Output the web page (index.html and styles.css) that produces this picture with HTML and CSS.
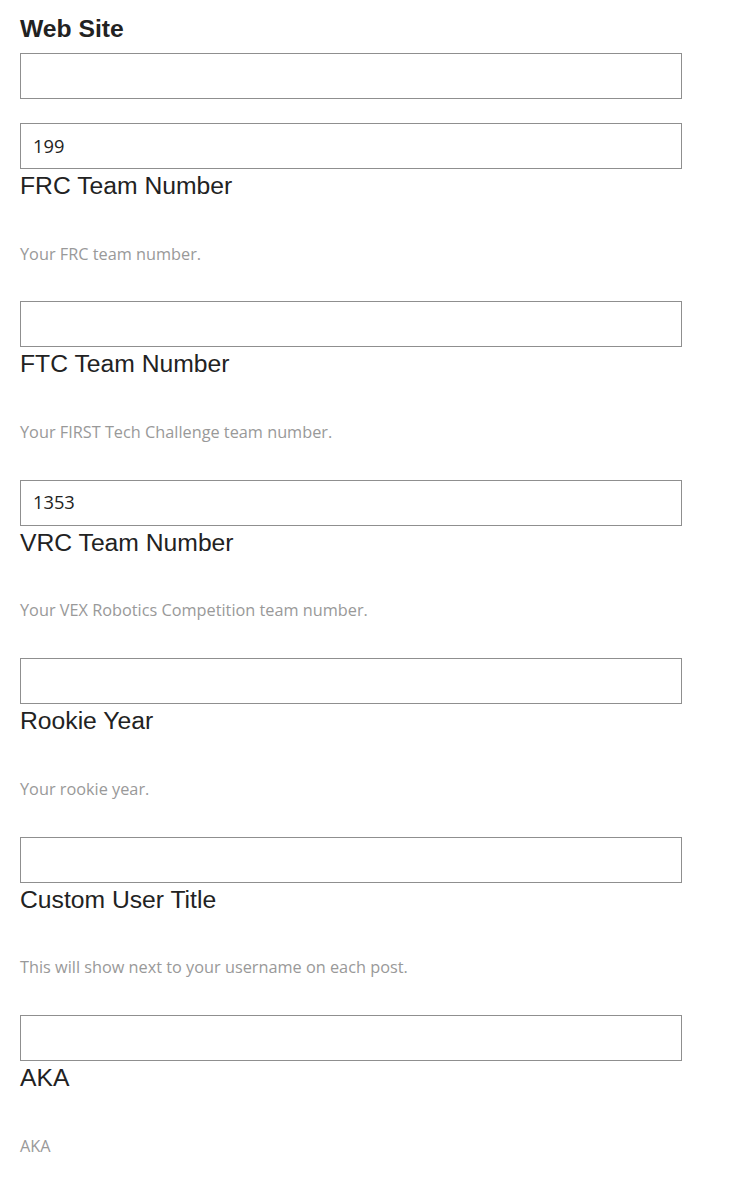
FILE: index.html
```html
<!DOCTYPE html>
<html lang="en">
<head>
<meta charset="utf-8">
<title>Profile fields</title>
<link rel="stylesheet" href="styles.css">
</head>
<body>
<form class="form">
  <h2 class="title">Web Site</h2>
  <input class="field first" type="text" value="">

  <div class="group">
    <input class="field" type="text" value="199">
    <label class="label">FRC Team Number</label>
    <p class="desc">Your FRC team number.</p>
  </div>

  <div class="group">
    <input class="field" type="text" value="">
    <label class="label">FTC Team Number</label>
    <p class="desc">Your FIRST Tech Challenge team number.</p>
  </div>

  <div class="group">
    <input class="field" type="text" value="1353">
    <label class="label">VRC Team Number</label>
    <p class="desc">Your VEX Robotics Competition team number.</p>
  </div>

  <div class="group">
    <input class="field" type="text" value="">
    <label class="label">Rookie Year</label>
    <p class="desc">Your rookie year.</p>
  </div>

  <div class="group">
    <input class="field" type="text" value="">
    <label class="label">Custom User Title</label>
    <p class="desc">This will show next to your username on each post.</p>
  </div>

  <div class="group">
    <input class="field" type="text" value="">
    <label class="label">AKA</label>
    <p class="desc">AKA</p>
  </div>
</form>
</body>
</html>
```

FILE: styles.css
```css
html, body {
  margin: 0;
  padding: 0;
  background: #fff;
}

.form {
  display: flex;
  flex-direction: column;
  padding: 15px 20px 0 20px;
  width: 662px;
}

.title {
  margin: 0 0 10px 0;
  font-family: "Liberation Sans", Arial, sans-serif;
  font-weight: bold;
  font-size: 24.7px;
  line-height: 28px;
  color: #222;
}

.field {
  display: block;
  box-sizing: border-box;
  width: 662px;
  height: 46px;
  margin: 0;
  padding: 0 12px 2px 12px;
  border: 1px solid #8f8f8f;
  border-radius: 0;
  background: #fff;
  font-family: "Open Sans", sans-serif;
  font-size: 18.3px;
  color: #222;
  outline: none;
}

.field.first {
  margin-bottom: 24px;
}

.group {
  display: flex;
  flex-direction: column;
}

.label {
  display: block;
  margin-top: 3px;
  font-family: "Liberation Sans", Arial, sans-serif;
  font-size: 24.7px;
  line-height: 28px;
  color: #222;
}

.desc {
  margin: 41.6px 0 35.8px 0;
  font-family: "Open Sans", sans-serif;
  font-size: 16.3px;
  line-height: 24px;
  color: #999;
}
```
